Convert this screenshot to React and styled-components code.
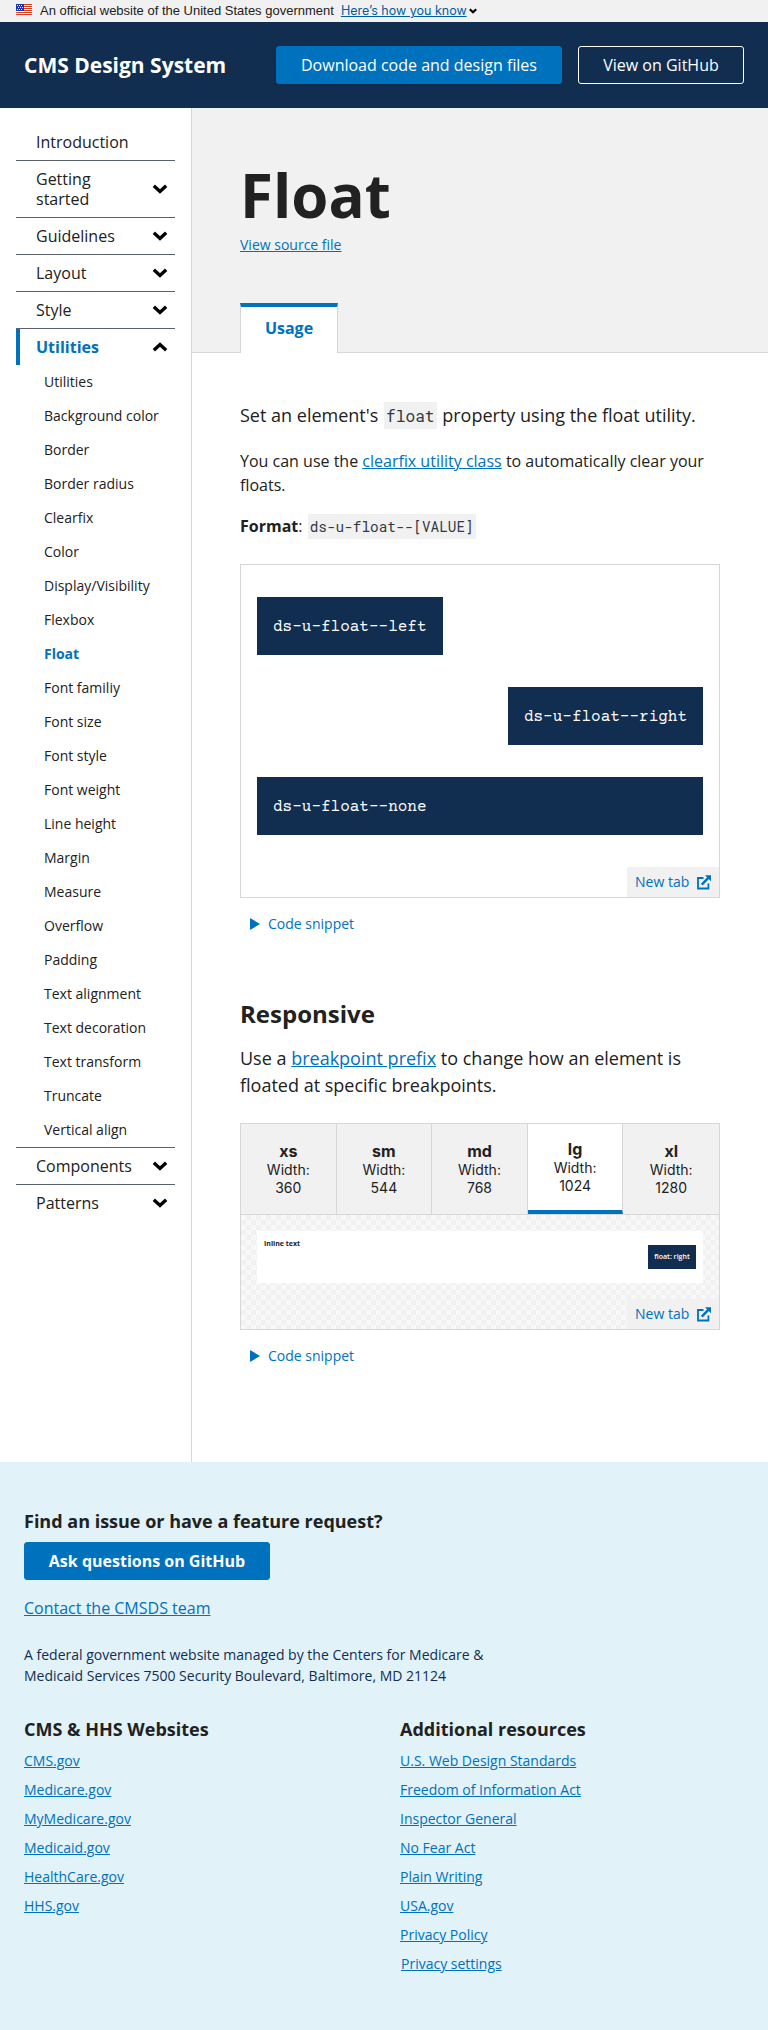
import React from "react";
import styled, { createGlobalStyle, css } from "styled-components";

const c = {
  navy: "#112e51", blue: "#0071bc", gray: "#f1f1f1", line: "#d6d7d9",
  text: "#212121", rule: "#5b616b", sky: "#e1f2f9",
};

const Global = createGlobalStyle`
  *, *::before, *::after { box-sizing: border-box; }
  body { margin: 0; background: #fff; color: ${c.text}; font: 16px/24px "Open Sans", sans-serif; }
  h1, h2, h3, p, ul { margin: 0; padding: 0; }
  ul { list-style: none; }
  button { font: inherit; border: 0; background: none; padding: 0; color: inherit; text-align: left; }
`;

const Link = styled.a`
  color: ${c.blue};
  text-decoration: underline;
`;

const Banner = styled.div`
  height: 22px;
  padding: 0 16px;
  display: flex;
  align-items: center;
  background: ${c.gray};
  font: 13px/16px "Liberation Sans", Arial, sans-serif;
  white-space: nowrap;
`;
const Flag = styled.svg`
  width: 16px;
  height: 11px;
  margin: 0 8px 3px 0;
`;
const BannerLink = styled(Link)`
  color: #005ea2;
  margin-left: 7px;
  font-family: Inter, sans-serif;
  font-size: 12.5px;
`;
const BannerChevron = styled.svg`
  width: 8px;
  height: 6px;
  margin-left: 2px;
`;

const Header = styled.header`
  height: 86px;
  padding: 0 24px;
  display: flex;
  align-items: center;
  gap: 16px;
  background: ${c.navy};
  color: #fff;
`;
const SiteTitle = styled.div`
  flex: 1;
  font-size: 21px;
  font-weight: 700;
  white-space: nowrap;
`;
const Button = styled.a`
  display: inline-flex;
  align-items: center;
  justify-content: center;
  width: ${(p) => p.$w}px;
  height: 38px;
  border: 1px solid ${(p) => (p.$outline ? "#fff" : c.blue)};
  border-radius: 3px;
  background: ${(p) => (p.$outline ? "transparent" : c.blue)};
  color: #fff;
  font-weight: ${(p) => (p.$bold ? 700 : 400)};
  white-space: nowrap;
`;

const Body = styled.div`
  display: flex;
  height: 1354px;
`;
const Sidebar = styled.nav`
  width: 192px;
  padding: 16px;
  border-right: 1px solid ${c.line};
`;
const NavGroup = styled.li`
  border-top: ${(p) => (p.$first ? 0 : 1)}px solid ${c.rule};
`;
const NavButton = styled.button`
  width: 100%;
  min-height: 36px;
  padding: 8px 6px 8px 20px;
  display: flex;
  align-items: center;
  justify-content: space-between;
  gap: 12px;
  line-height: 20px;
  ${(p) => p.$open && css`
    padding-left: 16px;
    border-left: 4px solid ${c.blue};
    color: ${c.blue};
    font-weight: 700;
  `}
`;
const NavChevron = styled.svg`
  width: 18px;
  height: 18px;
  flex: none;
  color: #000;
  transform: ${(p) => (p.$up ? "rotate(180deg)" : "none")};
`;
const SubItem = styled.li`
  height: 34px;
  padding-left: 28px;
  font-size: 14px;
  line-height: 34px;
  color: ${(p) => (p.$on ? c.blue : c.text)};
  font-weight: ${(p) => (p.$on ? 700 : 400)};
`;

const Main = styled.main`
  flex: 1;
  min-width: 0;
`;
const Hero = styled.div`
  height: 245px;
  padding: 48px 48px 0;
  display: flex;
  flex-direction: column;
  align-items: flex-start;
  background: ${c.gray};
  border-bottom: 1px solid ${c.line};
`;
const Title = styled.h1`
  font-size: 60px;
  line-height: 78px;
  font-weight: 700;
`;
const SourceLink = styled(Link)`
  font-size: 14px;
  line-height: 21px;
`;
const Tab = styled.div`
  margin-top: auto;
  margin-bottom: -1px;
  width: 98px;
  height: 50px;
  padding-bottom: 4px;
  display: flex;
  align-items: center;
  justify-content: center;
  background: #fff;
  border: 1px solid ${c.line};
  border-top: 4px solid ${c.blue};
  border-bottom: 0;
  color: ${c.blue};
  font-weight: 700;
`;
const Content = styled.div`
  padding: 49px 48px 0;
`;
const Lead = styled.p`
  font-size: 18px;
  line-height: 27px;
`;
const Para = styled.p`
  margin-top: ${(p) => p.$mt}px;
`;
const Code = styled.code`
  margin: 0 1px;
  padding: 3px 2px;
  background: ${c.gray};
  color: #323a45;
  font: 0.9em "Roboto Mono", "Liberation Mono", monospace;
`;
const Example = styled.section`
  margin-top: ${(p) => p.$mt}px;
  border: 1px solid ${c.line};
  display: flex;
  flex-direction: column;
`;
const FloatDemo = styled.div`
  padding: 32px 16px;
  display: flex;
  flex-direction: column;
  gap: 32px;
`;
const DemoBox = styled.div`
  align-self: ${(p) => p.$side};
  height: 58px;
  padding: 1px 16px 0;
  line-height: 58px;
  background: ${c.navy};
  color: #fff;
  font-family: "Courier Prime", "Liberation Mono", "Courier New", monospace;
`;
const NewTab = styled.a`
  align-self: flex-end;
  width: 92px;
  height: 30px;
  padding: 0 8px;
  display: flex;
  align-items: center;
  justify-content: space-between;
  background: ${c.gray};
  color: ${c.blue};
  font-size: 14px;
`;
const Snippet = styled.button`
  margin-top: 15px;
  padding-left: 10px;
  display: flex;
  align-items: center;
  gap: 8px;
  color: ${c.blue};
  font-size: 14px;
  line-height: 21px;
`;
const Heading = styled.h2`
  margin-top: 64px;
  margin-bottom: 15px;
  font-size: 24px;
  line-height: 32px;
`;
const Breakpoints = styled.div`
  height: 91px;
  display: grid;
  grid-template-columns: repeat(5, 1fr);
  border-bottom: 1px solid ${c.line};
`;
const Breakpoint = styled.div`
  display: flex;
  flex-direction: column;
  align-items: center;
  justify-content: center;
  border-right: ${(p) => (p.$last ? 0 : 1)}px solid ${c.line};
  border-bottom: ${(p) => (p.$on ? `4px solid ${c.blue}` : 0)};
  background: ${(p) => (p.$on ? "#fff" : c.gray)};
  font-family: Inter, sans-serif;
  font-size: 14px;
  line-height: 18px;
`;
const BpName = styled.b`
  font-size: 16px;
  line-height: 19px;
`;
const Checker = styled.div`
  height: 114px;
  padding: 16px 0 0 16px;
  display: flex;
  flex-direction: column;
  justify-content: space-between;
  background: repeating-conic-gradient(#f1f1f1 0 25%, #f8f8f8 0 50%) 0 0 / 10px 10px;
`;
const Preview = styled.div`
  width: 446px;
  height: 52px;
  padding: 7px;
  display: flex;
  justify-content: space-between;
  background: #fff;
  font-size: 7px;
  line-height: 11px;
  font-weight: 700;
`;
const PreviewBox = styled.div`
  margin-top: 7px;
  width: 48px;
  height: 24px;
  line-height: 24px;
  text-align: center;
  background: ${c.navy};
  color: #fff;
  font-weight: 600;
`;

const Footer = styled.footer`
  height: 568px;
  padding: 47px 24px 0;
  background: ${c.sky};
`;
const FootHeading = styled.h3`
  font-size: 18px;
  line-height: 24px;
`;
const AskButton = styled(Button)`
  margin-top: 9px;
`;
const Contact = styled.p`
  margin-top: 16px;
`;
const Address = styled.p`
  margin-top: 24px;
  width: 480px;
  font-size: 14px;
  line-height: 21px;
  color: ${c.navy};
`;
const Columns = styled.div`
  margin-top: 31px;
  display: grid;
  grid-template-columns: 376px 1fr;
`;
const LinkList = styled.ul`
  padding-top: 5px;
`;
const LinkItem = styled.li`
  height: 29px;
  font-size: 14px;
  line-height: 29px;
  padding-left: ${(p) => (p.$inset ? 1 : 0)}px;
`;

const Chevron = ({ up }) => (
  <NavChevron $up={up} viewBox="0 0 18 18" fill="none" stroke="currentColor" strokeWidth="3.4" strokeLinecap="square">
    <path d="M4.1 6.9 9 11.4l4.9-4.5" />
  </NavChevron>
);
const External = () => (
  <svg width="14" height="15" viewBox="0 0 14 15" fill="none" stroke="currentColor" strokeWidth="1.8">
    <path d="M6.5 3H1v10.5h10.4V8.6" />
    <path d="M4.8 9.6 11.5 2.6" strokeWidth="2.4" />
    <path d="M8 .3h6v6z" fill="currentColor" stroke="none" />
  </svg>
);
const ExternalTab = () => (
  <NewTab>New tab<External /></NewTab>
);
const CodeSnippet = () => (
  <Snippet>
    <svg width="10" height="12" viewBox="0 0 10 12" fill="currentColor"><path d="M0 0 10 6 0 12z" /></svg>
    Code snippet
  </Snippet>
);

const before = ["Getting started", "Guidelines", "Layout", "Style"];
const utilities = ["Utilities", "Background color", "Border", "Border radius", "Clearfix", "Color",
  "Display/Visibility", "Flexbox", "Float", "Font familiy", "Font size", "Font style", "Font weight",
  "Line height", "Margin", "Measure", "Overflow", "Padding", "Text alignment", "Text decoration",
  "Text transform", "Truncate", "Vertical align"];
const breakpoints = [["xs", 360], ["sm", 544], ["md", 768], ["lg", 1024], ["xl", 1280]];
const sites = ["CMS.gov", "Medicare.gov", "MyMedicare.gov", "Medicaid.gov", "HealthCare.gov", "HHS.gov"];
const resources = ["U.S. Web Design Standards", "Freedom of Information Act", "Inspector General",
  "No Fear Act", "Plain Writing", "USA.gov", "Privacy Policy", "Privacy settings"];

const Group = ({ label, first }) => (
  <NavGroup $first={first}>
    <NavButton>{label}{!first && <Chevron />}</NavButton>
  </NavGroup>
);

export default function App() {
  return (
    <>
      <Global />
      <Banner>
        <Flag viewBox="0 0 16 11">
          <path fill="#fff" d="M0 0h16v11H0z" />
          <path fill="#db3e1f" d="M0 0h16v1H0zM0 2h16v1H0zM0 4h16v1H0zM0 6h16v1H0zM0 8h16v1H0zM0 10h16v1H0z" />
          <path fill="#1e33b1" d="M0 0h8v7H0z" />
          <path fill="#fff" d="M1 1h1v1H1zM3 1h1v1H3zM5 1h1v1H5zM2 3h1v1H2zM4 3h1v1H4zM6 3h1v1H6zM1 5h1v1H1zM3 5h1v1H3zM5 5h1v1H5z" />
        </Flag>
        <span>An official website of the United States government</span>
        <BannerLink>Here’s how you know</BannerLink>
        <BannerChevron viewBox="0 0 8 6" fill="none" stroke="#000" strokeWidth="2.2"><path d="m.8 1.2 3.2 3 3.2-3" /></BannerChevron>
      </Banner>
      <Header>
        <SiteTitle>CMS Design System</SiteTitle>
        <Button $w={286}>Download code and design files</Button>
        <Button $w={166} $outline>View on GitHub</Button>
      </Header>
      <Body>
        <Sidebar>
          <ul>
            <Group label="Introduction" first />
            {before.map((b) => <Group key={b} label={b} />)}
            <NavGroup>
              <NavButton $open>Utilities<Chevron up /></NavButton>
              <ul>{utilities.map((u) => <SubItem key={u} $on={u === "Float"}>{u}</SubItem>)}</ul>
            </NavGroup>
            <Group label="Components" />
            <Group label="Patterns" />
          </ul>
        </Sidebar>
        <Main>
          <Hero>
            <Title>Float</Title>
            <SourceLink>View source file</SourceLink>
            <Tab>Usage</Tab>
          </Hero>
          <Content>
            <Lead>Set an element's <Code>float</Code> property using the float utility.</Lead>
            <Para $mt={20}>You can use the <Link>clearfix utility class</Link> to automatically clear your floats.</Para>
            <Para $mt={17}><b>Format</b>: <Code>ds-u-float--[VALUE]</Code></Para>
            <Example $mt={26}>
              <FloatDemo>
                <DemoBox $side="flex-start">ds-u-float--left</DemoBox>
                <DemoBox $side="flex-end">ds-u-float--right</DemoBox>
                <DemoBox $side="stretch">ds-u-float--none</DemoBox>
              </FloatDemo>
              <ExternalTab />
            </Example>
            <CodeSnippet />
            <Heading>Responsive</Heading>
            <Lead>Use a <Link>breakpoint prefix</Link> to change how an element is floated at specific breakpoints.</Lead>
            <Example $mt={24}>
              <Breakpoints>
                {breakpoints.map(([name, w]) => (
                  <Breakpoint key={name} $last={name === "xl"} $on={name === "lg"}>
                    <BpName>{name}</BpName><span>Width:</span><span>{w}</span>
                  </Breakpoint>
                ))}
              </Breakpoints>
              <Checker>
                <Preview><span>Inline text</span><PreviewBox>float: right</PreviewBox></Preview>
                <ExternalTab />
              </Checker>
            </Example>
            <CodeSnippet />
          </Content>
        </Main>
      </Body>
      <Footer>
        <FootHeading>Find an issue or have a feature request?</FootHeading>
        <AskButton $w={246} $bold>Ask questions on GitHub</AskButton>
        <Contact><Link>Contact the CMSDS team</Link></Contact>
        <Address>A federal government website managed by the Centers for Medicare &amp; Medicaid Services 7500 Security Boulevard, Baltimore, MD 21124</Address>
        <Columns>
          <div>
            <FootHeading>CMS &amp; HHS Websites</FootHeading>
            <LinkList>{sites.map((s) => <LinkItem key={s}><Link>{s}</Link></LinkItem>)}</LinkList>
          </div>
          <div>
            <FootHeading>Additional resources</FootHeading>
            <LinkList>{resources.map((s, i) => <LinkItem key={s} $inset={i === 7}><Link>{s}</Link></LinkItem>)}</LinkList>
          </div>
        </Columns>
      </Footer>
    </>
  );
}
